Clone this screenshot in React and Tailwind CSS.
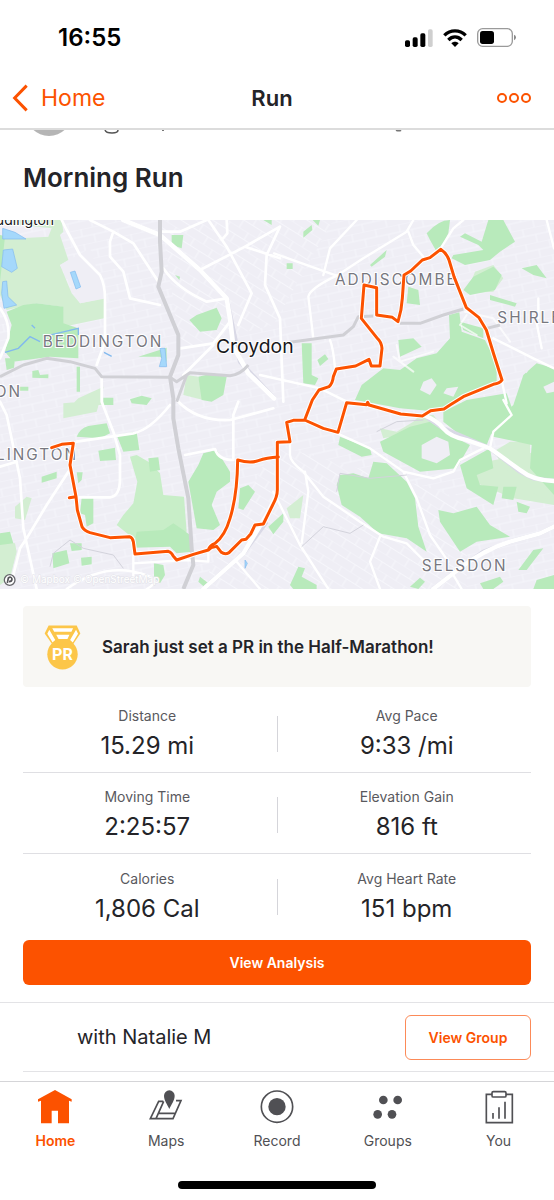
import React from "react";

const stats = [
  [
    { label: "Distance", value: "15.29 mi" },
    { label: "Avg Pace", value: "9:33 /mi" },
  ],
  [
    { label: "Moving Time", value: "2:25:57" },
    { label: "Elevation Gain", value: "816 ft" },
  ],
  [
    { label: "Calories", value: "1,806 Cal" },
    { label: "Avg Heart Rate", value: "151 bpm" },
  ],
];

const HomeIcon = () => (
  <svg viewBox="0 0 108 108" className="size-9" fill="currentColor" aria-hidden="true">
    <path d="M54 3 104 31V38L96 35V103H63V65H44V103H12V35L3 38V31Z" />
  </svg>
);

const MapsIcon = () => (
  <svg viewBox="0 0 108 108" className="size-9" fill="none" stroke="currentColor" strokeWidth="5" aria-hidden="true">
    <path d="M46 37H32L7 89H75L99 35H84M47 37 24 89M31 73H81" />
    <path d="M64 60C58 46 48 34 48 20A16 16 0 0 1 80 20C80 34 70 46 64 60Z" fill="currentColor" stroke="none" />
  </svg>
);

const RecordIcon = () => (
  <svg viewBox="0 0 108 108" className="size-9" aria-hidden="true">
    <circle cx="54" cy="53" r="47" fill="none" stroke="currentColor" strokeWidth="5" />
    <circle cx="54" cy="53" r="26" fill="currentColor" />
  </svg>
);

const GroupsIcon = () => (
  <svg viewBox="0 0 108 108" className="size-9" fill="currentColor" aria-hidden="true">
    <circle cx="40" cy="33" r="13" />
    <circle cx="83" cy="33" r="13" />
    <circle cx="23" cy="76" r="13" />
    <circle cx="66" cy="76" r="13" />
  </svg>
);

const YouIcon = () => (
  <svg viewBox="0 0 108 108" className="size-9" fill="none" stroke="currentColor" strokeWidth="5" aria-hidden="true">
    <path d="M33 16H16V101H94V16H75" />
    <rect x="33" y="8" width="42" height="16" rx="4" />
    <path d="M36 72V89M54 55V89M72 38V89" />
  </svg>
);

const tabs = [
  { label: "Home", Icon: HomeIcon, active: true },
  { label: "Maps", Icon: MapsIcon },
  { label: "Record", Icon: RecordIcon },
  { label: "Groups", Icon: GroupsIcon },
  { label: "You", Icon: YouIcon },
];

const StatusBar = () => (
  <div className="flex h-[67px] items-center justify-between pt-2 pr-[37px] pl-[58px]">
    <span className="text-[24px] leading-7 font-semibold text-black">16:55</span>
    <div className="flex items-center gap-[10px]">
      <svg viewBox="0 0 84 54" className="h-[18px] w-7" aria-hidden="true">
        <rect x="0" y="34" width="15" height="20" rx="5" />
        <rect x="23" y="25" width="15" height="29" rx="5" />
        <rect x="46" y="13" width="15" height="41" rx="5" />
        <rect x="69" y="1" width="14" height="53" rx="5" fill="#cfcfcf" />
      </svg>
      <svg viewBox="0 0 72 54" className="h-[18px] w-6" fill="none" stroke="#000" strokeWidth="10" aria-hidden="true">
        <path d="M4 19C22 1 50 1 68 19" />
        <path d="M16 33C28 21 44 21 56 33" />
        <path d="M25 43C31 37 41 37 47 43L36 54Z" fill="#000" stroke="none" />
      </svg>
      <svg viewBox="0 0 120 57" className="h-[19px] w-10" aria-hidden="true">
        <rect x="2" y="2" width="104" height="53" rx="15" fill="none" stroke="#9a9a9a" strokeWidth="4" />
        <rect x="9" y="9" width="42" height="39" rx="8" />
        <path d="M111 20Q117 22 117 28T111 37Z" fill="#8a8a8a" />
      </svg>
    </div>
  </div>
);

const NavBar = () => (
  <header className="grid h-[63px] grid-cols-3 items-center border-b-2 border-[#dcdcdc] pr-[22px] pl-3 leading-7">
    <a href="#home" className="flex items-center gap-[13px] text-[23px] text-[#fc5200]">
      <svg viewBox="0 0 48 84" className="h-7 w-4" fill="none" stroke="currentColor" strokeWidth="9" aria-hidden="true">
        <path d="M44 5 8 42 44 79" />
      </svg>
      Home
    </a>
    <h1 className="text-center text-[22px] font-semibold">Run</h1>
    <button type="button" aria-label="More" className="justify-self-end text-[#fc5200]">
      <svg viewBox="0 0 36 12" className="h-3 w-9" fill="none" stroke="currentColor" strokeWidth="2" aria-hidden="true">
        <circle cx="6" cy="6" r="4" />
        <circle cx="18" cy="6" r="4" />
        <circle cx="30" cy="6" r="4" />
      </svg>
    </button>
  </header>
);

// Bottom edge of the athlete row, mostly scrolled under the nav bar
const AthleteRow = () => (
  <svg viewBox="0 0 554 8" className="block w-full" aria-hidden="true">
    <circle cx="49" cy="-17" r="23" fill="#b5b5b5" />
    <path d="M105 0Q106 3 112 3Q118 3 118 0" fill="none" stroke="#555" strokeWidth="1.5" />
    <path d="M163 0V1M396 0Q399 1 401 0" stroke="#777" strokeWidth="2" />
  </svg>
);

const ROUTE =
  "M155 698 185 688 220 685 210 750 228 845 208 848 228 845 232 885 246 935Q252 946 270 953L330 968 388 965Q398 968 400 980L405 1017 505 1009Q515 1012 519 1022L530 1035 580 1018 625 1005Q629 990 645 985Q675 962 690 910Q712 840 713 735Q750 746 775 737T835 726M625 1005 634 998 650 994 664 1012Q675 1020 687 1013L725 975 738 973 752 957 765 930 790 927 818 870Q832 845 832 825V682L870 680 860 622 880 616 914 615 937 555 957 525 987 515Q998 505 1000 485L1009 462 1067 453 1107 433 1114 453H1140L1146 400Q1144 380 1132 370L1084 310 1092 210 1130 218V300L1177 307 1194 320Q1205 285 1207 250L1212 180 1232 168 1267 135 1290 128 1322 103Q1340 115 1347 135L1362 185 1399 278 1437 308 1459 345 1482 420 1506 495Q1500 505 1480 508L1390 545 1350 570 1332 582 1292 587 1267 603 1202 597 1107 570 1103 562 1100 569 1040 563 1014 652 970 640 914 615";

const RouteMap = () => (
  <svg viewBox="0 15 1662 1107" className="block w-full" role="img" aria-label="Map of the run">
    <defs>
      <pattern id="streetsA" width="72" height="46" patternUnits="userSpaceOnUse" patternTransform="rotate(-12)">
        <path d="M0 0H72M0 23H72M12 0V23M48 23V46" fill="none" stroke="#f6f6fb" strokeWidth="3" />
      </pattern>
      <pattern id="streetsB" width="64" height="50" patternUnits="userSpaceOnUse" patternTransform="rotate(32)">
        <path d="M0 0H64M0 25H64M20 0V25M52 25V50" fill="none" stroke="#f6f6fb" strokeWidth="3" />
      </pattern>
    </defs>
    <rect y="15" width="1662" height="1107" fill="#efeef5" />
    <rect y="15" width="1662" height="1107" fill="url(#streetsA)" />
    <path d="M485 15H1000L820 330 540 400ZM822 690 1400 850V1122H600Z" fill="#efeef5" />
    <path d="M485 15H1000L820 330 540 400ZM822 690 1400 850V1122H600Z" fill="url(#streetsB)" />

    {/* pale open land */}
    <g fill="#d3eed2">
      <path d="M20 15H185L190 50 180 60 205 135 180 150 215 235 240 265 312 250V310L190 335 185 275 110 265 20 285 0 240V60L60 70 145 65 155 40 60 30Z" />
      <path d="M560 480 595 485 610 555 550 540ZM235 550 310 515 305 570H215ZM190 565 300 555 290 590 190 610Z" />
      <path d="M390 725 410 720 445 740 480 775 490 840 552 845 560 950 400 970 350 930 370 900 400 865 412 800Z" fill="#c8eec8" />
      <path d="M0 980 45 985 50 1010 30 1090 0 1110ZM45 875 80 845 95 850 75 915 45 910Z" />
      <path d="M1140 640 1190 650 1240 620 1260 600 1300 600 1340 650 1250 650 1150 670ZM1410 750 1662 700V870L1540 850 1420 800ZM1425 170 1480 150 1510 190 1480 230 1400 235Z" />
      <path d="M1480 710 1530 680 1590 680V760H1662V860L1560 820Z" />
      <path d="M860 880 910 840 900 910 870 910Z" />
    </g>

    {/* parks and woods */}
    <g fill="#b8eabb">
      <path d="M20 290 70 270 110 265 190 275V325L235 340V430L150 425 40 440 15 410 35 330ZM15 430 45 430 42 458 20 465ZM0 60 15 65 0 200Z" />
      <path d="M230 455H240V530H230ZM55 515H85V527H55ZM97 468 115 465 120 480 145 478V490L97 488ZM310 548H340V570H310ZM390 553 425 542 455 550 440 570 395 565Z" />
      <path d="M515 60H550L545 100 515 90ZM568 315 590 300 650 278 665 310 650 345 600 350ZM595 485 640 475 680 485 670 540 635 560 605 555ZM525 180 540 185 538 195ZM790 15H815V30ZM415 425 500 398 500 440 480 425Z" />
      <path d="M230 665Q240 640 265 633L320 625 330 655 300 670ZM295 707 345 698 348 735 300 738ZM350 660 410 650 418 705 370 710ZM445 730 475 727 480 765 450 770ZM125 785 170 770V790L125 803ZM230 772H248L245 795 235 805ZM245 848H280V925L260 935 255 900 240 895Z" />
      <path d="M410 950 490 945 520 925 550 945 570 960 575 1010 530 1015 510 995 400 998ZM595 750 610 715 650 705 690 770 690 800 650 830 635 870 660 930 640 945 590 940 565 800ZM720 820 745 810 765 830 730 885 715 880Z" />
      <path d="M0 955 30 950 40 985 0 990ZM157 1015 200 1005 208 1045 160 1060ZM210 985 245 985V1005L215 1008ZM243 1028 275 1025V1048L245 1052ZM462 1045 490 1050 495 1080 480 1105 462 1085ZM600 1085 625 1105 620 1122 595 1100ZM805 935 850 895V920L820 958Z" />
      <path d="M910 50 935 30 937 45 910 68ZM938 15H960L955 32ZM905 385H935V480L955 490 945 510 910 505ZM952 435 975 418 985 432 960 453ZM1110 150 1160 105 1155 125 1115 155ZM860 145H878V162H860Z" />
      <path d="M1280 55Q1315 15 1350 15L1345 55 1330 85 1310 110 1290 75ZM1465 15H1510L1545 80 1500 110 1470 135 1395 150 1355 130 1360 120 1450 105 1435 90 1380 65 1395 55 1445 80Z" />
      <path d="M1225 215 1255 225 1260 270 1220 265ZM1195 375 1240 370 1265 395 1200 425ZM1420 185 1480 155 1505 180 1485 225 1410 240 1390 225ZM1470 240 1550 265 1545 275 1470 255ZM1565 160 1610 150 1640 190 1600 180Z" />
      <path d="M1347 300 1378 292 1385 350 1455 375 1470 405 1490 460 1490 500 1400 535 1350 570 1290 588 1200 580 1120 565 1065 555 1085 510 1150 460 1200 465 1250 430 1310 415 1350 370ZM1380 320 1450 340 1450 370 1390 345Z" />
      <path d="M1570 480 1610 445 1662 460V840L1590 760 1595 690 1480 665 1470 650 1510 600 1540 570ZM1400 555 1520 535 1540 590 1480 640 1460 690 1380 660 1330 620 1330 590Z" />
      <path d="M1140 680 1230 635 1290 620 1350 660 1410 690 1370 760 1260 770 1150 710ZM1020 665 1110 700 1115 720 1085 725 1015 690Z" />
      <path d="M1020 780 1060 775 1105 790 1120 740 1160 745 1220 800 1245 850 1255 935 1280 1010 1220 970 1135 955 1080 905 1025 870 1010 810Z" />
      <path d="M1380 750 1470 700 1480 760 1430 780 1440 810 1495 815 1480 870 1400 820ZM1315 885 1360 895 1430 875 1470 930 1530 965 1430 980 1380 1010 1320 920ZM1510 815 1550 815 1540 855 1505 850ZM1550 860 1590 875 1580 895 1555 890Z" />
      <path d="M1555 1065 1600 1005 1630 1000 1580 1065ZM1440 1105 1500 1085 1510 1100 1480 1122H1450ZM1610 1095 1662 1080V1122H1600ZM870 1110 895 1055 915 1060 905 1085 950 1110V1122H880ZM1230 1115 1260 1088 1275 1100 1255 1122Z" />
    </g>

    {/* clearings */}
    <g fill="#efeef5">
      <path d="M1265 690 1310 665 1345 680 1350 720 1310 745 1265 730ZM1270 500 1295 490 1310 510 1290 540 1260 525ZM1345 830 1370 840 1365 860 1350 850ZM1340 520 1375 515 1360 545 1330 535ZM1630 515 1662 500V530L1640 535Z" />
      <path d="M1490 470 1520 460 1525 475 1500 490ZM1560 450 1590 455 1580 475Z" />
      <path d="M180 150 270 100 320 250 240 265Z" />
    </g>

    {/* water */}
    <g fill="#a5d8fb" stroke="#82b9ee" strokeWidth="2">
      <path d="M8 40 45 52 78 72 8 72ZM10 105 38 102 52 160 35 172 5 155ZM8 200 20 198 24 245 50 270 12 280 5 235ZM211 172 225 168 242 216 228 222ZM480 400H495L500 455H478L485 430ZM735 1035 742 1045 735 1060Z" />
      <path d="M15 412 55 400 90 365 120 380M130 365 235 340V360M312 412 335 424M95 330 105 340" fill="none" strokeWidth="4" />
    </g>

    {/* white roads */}
    <g fill="none" stroke="#d9d9e6" strokeWidth="13" strokeLinejoin="round">
      <path d="M370 15 480 60 600 165 680 250 700 345 720 440 822 550M1270 600 1330 640 1470 700 1560 770 1600 790 1662 798M1300 1122 1380 1060 1450 1010 1530 980 1620 955 1662 935M610 1122 730 1015 800 920" />
    </g>
    <g fill="none" stroke="#fff" strokeLinejoin="round" strokeLinecap="round">
      <path d="M185 15 200 45 240 120 300 180Q315 210 315 250V380L290 450M270 15 340 50 400 85 475 200M340 50 330 80V125L370 170 390 250 480 270M490 160Q530 220 620 260L680 250M600 165 735 95 840 35M485 50H540L620 15M625 15 680 95 755 235 715 330M735 95 840 130M840 35 800 120 795 210 840 310 850 560M680 15 682 55 665 75" strokeWidth="8" />
      <path d="M370 15 480 60 600 165 680 250 690 310 700 395 745 475 822 550" strokeWidth="14" />
      <path d="M540 400 640 385 690 320M550 480 640 390M0 280Q30 320 25 370L0 430M305 490V560L340 650 360 720V790Q360 845 330 847H230M230 680 400 655Q450 645 510 570M530 555Q590 620 690 615L820 580M0 560 20 600 60 790 70 940 110 1122M205 770 140 870 80 970 60 1000 35 1100M0 755 50 740M555 720 645 702Q655 735 700 735V600L715 560" strokeWidth="8" />
      <path d="M822 115 990 175 1010 182M1010 182Q930 220 925 245L940 370M970 180 990 100 1070 15M1010 182 1090 130 1220 50 1240 15M1225 50 1240 90 1270 125M1320 103 1360 40 1390 15M990 375Q1000 400 1005 460M780 480 960 520 1040 560M1480 370 1600 430 1662 460M1610 325 1625 400M1615 250V310M1506 500 1520 565M1000 650 1110 700 1210 770 1250 850 1290 960 1345 1040M1210 770 1300 790 1360 770 1380 735 1450 700M1510 555 1535 600 1480 650 1470 700M870 680V720Q870 740 910 770L970 845 1080 920 1150 965 1220 985 1270 1035M915 770 925 830 905 985M820 830 900 990 985 1122M1140 965 1110 1040 1140 1122M400 1020V1100M200 1122Q300 1050 400 1070T440 1122M400 1045 560 1035 625 1040V1010M710 1040 780 1122M1360 1080 1385 1122M1640 15 1662 100" strokeWidth="7" />
      <path d="M1270 600Q1310 615 1330 640T1400 675L1470 700 1560 765Q1600 797 1662 798M1300 1122 1380 1060Q1450 1005 1530 980L1620 955 1662 935M610 1122 730 1015 800 900 825 850" strokeWidth="13" />
      <path d="M1190 390 1200 440 1300 410M1180 425 1240 470M1395 290 1480 310 1530 380M1400 300 1380 330 1430 360" strokeWidth="6" opacity=".7" />
    </g>
    <g fill="none" stroke="#d3d3dc" strokeWidth="3">
      <path d="M150 1055 160 1015 210 975 250 1000 340 1020 370 1060M1010 830 1020 775 1110 790 1220 780M905 995 970 935 1050 955 1090 930M1130 650 1190 620 1270 615" />
    </g>

    {/* main roads */}
    <g fill="none" stroke="#d0d0d5" strokeLinejoin="round">
      <path d="M480 15V80L485 170 475 215 535 360V420L510 485 520 550V610L535 700 565 850 575 1000 580 1050 550 1122" strokeWidth="12" />
      <path d="M0 485 70 450 140 430 210 440 285 460 305 485 510 487 530 500 570 473 690 482Q720 480 745 450M530 560 560 480M870 382 1030 360 1060 335 1075 305 1120 303M1200 325H1260L1330 300 1390 282M1460 340 1500 330" strokeWidth="9" />
    </g>

    <g fontFamily="Inter, sans-serif" fill="#77777f" stroke="#fff" strokeWidth="6" paintOrder="stroke" fontSize="46" letterSpacing="6">
      <text x="128" y="396">BEDDINGTON</text>
      <text x="1005" y="209">ADDISCOMBE</text>
      <text x="1492" y="325">SHIRLEY</text>
      <text x="-12" y="735">LINGTON</text>
      <text x="-16" y="545">ON</text>
      <text x="1265" y="1068">SELSDON</text>
    </g>
    <g fontFamily="Inter, sans-serif" fill="#18181b" stroke="#fff" strokeWidth="6" paintOrder="stroke">
      <text x="648" y="415" fontSize="58">Croydon</text>
      <text x="-38" y="31" fontSize="42">uddington</text>
    </g>

    <path d={ROUTE} fill="none" stroke="#fff" strokeWidth="15" strokeLinejoin="round" strokeLinecap="round" />
    <path d={ROUTE} fill="none" stroke="#fc5200" strokeWidth="9" strokeLinejoin="round" strokeLinecap="round" />

    <g>
      <circle cx="29" cy="1095" r="16" fill="#fff" stroke="#66666b" strokeWidth="4" />
      <path d="M22 1104 25 1089Q33 1083 36 1092 36 1100 27 1100" fill="none" stroke="#55555a" strokeWidth="5" />
      <text x="60" y="1105" fontFamily="Inter, sans-serif" fontSize="30" fill="#fff" stroke="#e2e2e8" strokeWidth="3" paintOrder="stroke">© Mapbox © OpenStreetMap</text>
    </g>
  </svg>
);

const Medal = () => (
  <svg viewBox="41 46 112 138" className="h-[46px] w-[37px]" aria-hidden="true">
    <path d="M55 50H140L151 74 128 108H67L43 74Z" fill="#fcc649" />
    <path d="M66 58H129L124 69H72ZM78 78H118L112 91H85ZM57 63 75 94 67 101 51 75ZM138 63 120 94 128 101 144 75Z" fill="#fff" />
    <circle cx="97" cy="137" r="46" fill="#fcc649" />
    <text x="97" y="155" textAnchor="middle" fontFamily="Roboto, sans-serif" fontSize="49" fontWeight="700" fill="#fff">PR</text>
  </svg>
);

const App = () => {
  return (
    <div className="flex min-h-screen flex-col bg-white font-['Inter',sans-serif] text-[#242428]">
      <StatusBar />
      <NavBar />

      <main className="flex-1">
        <AthleteRow />
        <h2 className="px-[23px] pt-[22px] pb-6 text-[26px] leading-9 font-semibold">Morning Run</h2>
        <RouteMap />

        <section className="px-[23px] pt-[17px] pb-[17px]">
          <div className="flex h-[81px] items-center gap-[21px] rounded-sm bg-[#f8f7f4] px-[21px]">
            <Medal />
            <p className="text-[17px] leading-6 font-semibold">Sarah just set a PR in the Half-Marathon!</p>
          </div>

          <dl className="mt-[5px] divide-y divide-[#dfdfe3]">
            {stats.map((row) => (
              <div key={row[0].label} className="flex h-[81px] items-center pt-2 pb-1">
                {row.map(({ label, value }, i) => (
                  <React.Fragment key={label}>
                    {i === 1 && <div className="mx-[5px] h-9 w-px bg-[#d5d5da]" />}
                    <div className="flex-1 text-center">
                      <dt className="text-[14px] leading-6 text-[#59595e]">{label}</dt>
                      <dd className="text-[24px] leading-9">{value}</dd>
                    </div>
                  </React.Fragment>
                ))}
              </div>
            ))}
          </dl>

          <button type="button" className="mt-[5px] h-[45px] w-full rounded-md bg-[#fc5200] text-[14px] font-semibold text-white">
            View Analysis
          </button>
        </section>

        <section className="border-t border-[#e3e3e6] pl-[23px]">
          <div className="flex h-[69px] items-center justify-between border-b border-[#e3e3e6] pr-[23px] pl-[54px]">
            <p className="text-[20px] leading-7">with Natalie M</p>
            <button type="button" className="h-[45px] w-[126px] rounded-md border border-[#fc8a58] text-[14px] font-semibold text-[#fc5200]">
              View Group
            </button>
          </div>
        </section>
      </main>

      <footer className="border-t border-[#d5d5d8] pt-[7px] pb-[11px]">
        <nav className="grid grid-cols-5">
          {tabs.map(({ label, Icon, active }) => (
            <a
              key={label}
              href={`#${label.toLowerCase()}`}
              className={
                active
                  ? "flex flex-col items-center gap-1 text-[14px] leading-6 font-semibold text-[#fc5200]"
                  : "flex flex-col items-center gap-1 text-[14px] leading-6 text-[#505054]"
              }
            >
              <Icon />
              {label}
            </a>
          ))}
        </nav>
        <div className="mx-auto mt-7 h-2 w-[198px] rounded-full bg-black" />
      </footer>
    </div>
  );
};

export default App;
